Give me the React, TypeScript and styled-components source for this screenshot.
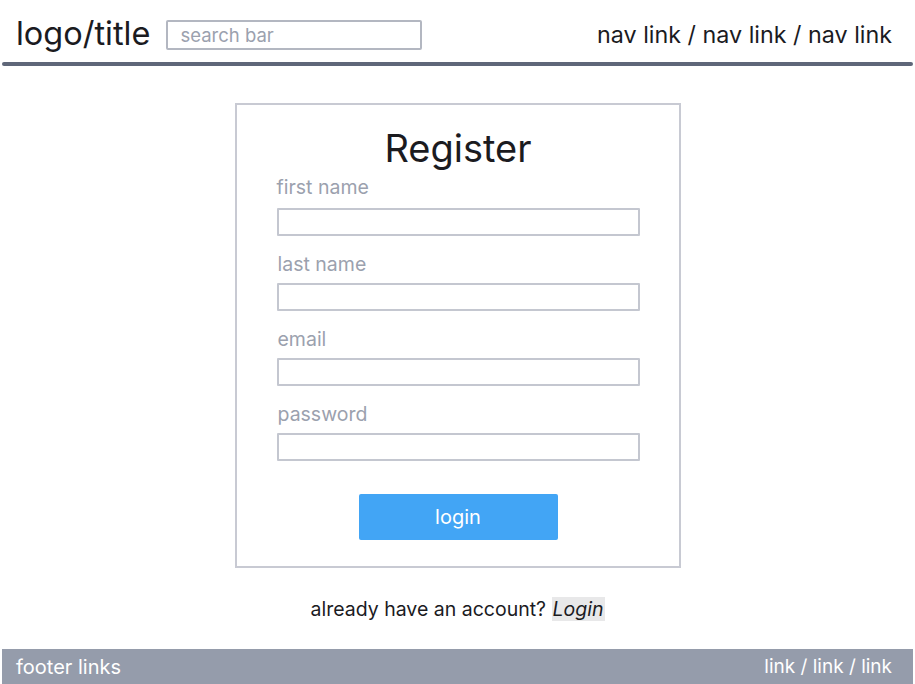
import React from "react";
import styled, { createGlobalStyle } from "styled-components";

const Global = createGlobalStyle`
  html, body { margin: 0; padding: 0; background: #ffffff; }
  body { font-family: Inter, "Noto Sans", "Liberation Sans", sans-serif; color: #1b1b1f; }
  * { box-sizing: border-box; }
`;

const Page = styled.div`
  width: 915px;
  height: 684px;
  display: flex;
  flex-direction: column;
  overflow: hidden;
`;

const Header = styled.header`
  display: flex;
  align-items: center;
  height: 62px;
  padding: 7px 23px 0 16px;
`;

const Logo = styled.div`
  font-size: 32.5px;
  line-height: 1;
  color: #1b1b1f;
`;

const Search = styled.div`
  margin-left: 16px;
  width: 256px;
  height: 30px;
  border: 2px solid #b3b7c1;
  border-radius: 2px;
  display: flex;
  align-items: center;
  padding-left: 12px;
  font-size: 18.5px;
  color: #9ba1ae;
`;

const Nav = styled.nav`
  margin-left: auto;
  font-size: 23.3px;
  color: #1b1b1f;
`;

const Rule = styled.div`
  margin: 0 2px;
  height: 4px;
  border-radius: 2px;
  background: #5f6779;
`;

const Main = styled.main`
  flex: 1;
  display: flex;
  flex-direction: column;
  align-items: center;
  padding-top: 37px;
`;

const Card = styled.section`
  width: 446px;
  border: 2px solid #c8cad3;
  padding: 21px 39px 26px 40px;
  display: flex;
  flex-direction: column;
`;

const Title = styled.h1`
  margin: 0;
  text-align: center;
  font-weight: 400;
  font-size: 38px;
  line-height: 44px;
  color: #1b1b1f;
`;

const Field = styled.div<{ $first?: boolean }>`
  display: flex;
  flex-direction: column;
  margin-top: ${(p) => (p.$first ? "4px" : "15px")};
`;

const Label = styled.label<{ $indent?: number; $first?: boolean }>`
  font-size: 19.5px;
  line-height: 26px;
  color: #9ba1ae;
  padding-left: ${(p) => p.$indent ?? 0}px;
  margin-bottom: ${(p) => (p.$first ? "8px" : "6px")};
`;

const Input = styled.div`
  width: 363px;
  height: 28px;
  border: 2px solid #c4c7d0;
  border-radius: 1px;
`;

const Button = styled.button`
  align-self: center;
  margin-top: 33px;
  width: 199px;
  height: 46px;
  border: none;
  border-radius: 2px;
  background: #42a5f5;
  color: #ffffff;
  font-family: inherit;
  font-size: 20px;
  cursor: pointer;
`;

const Prompt = styled.p`
  margin: 28px 0 0;
  font-size: 19.5px;
  line-height: 26px;
  color: #1b1b1f;
`;

const LoginLink = styled.em`
  background: #e8e8e9;
  padding: 0 1px;
`;

const Footer = styled.footer`
  margin: 0 2px;
  height: 35px;
  background: #959cab;
  display: flex;
  align-items: center;
  justify-content: space-between;
  padding: 0 21px 0 14px;
  color: #ffffff;
`;

const FooterText = styled.span<{ $size: number }>`
  font-size: ${(p) => p.$size}px;
`;

const fields = [
  { label: "first name", indent: 0 },
  { label: "last name", indent: 1 },
  { label: "email", indent: 1 },
  { label: "password", indent: 1 },
];

export default function App() {
  return (
    <Page>
      <Global />
      <Header>
        <Logo>logo/title</Logo>
        <Search>search bar</Search>
        <Nav>nav link / nav link / nav link</Nav>
      </Header>
      <Rule />
      <Main>
        <Card>
          <Title>Register</Title>
          {fields.map((f, i) => (
            <Field key={f.label} $first={i === 0}>
              <Label $indent={f.indent} $first={i === 0}>
                {f.label}
              </Label>
              <Input />
            </Field>
          ))}
          <Button>login</Button>
        </Card>
        <Prompt>
          already have an account? <LoginLink>Login</LoginLink>
        </Prompt>
      </Main>
      <Footer>
        <FooterText $size={20}>footer links</FooterText>
        <FooterText $size={19}>link / link / link</FooterText>
      </Footer>
    </Page>
  );
}
